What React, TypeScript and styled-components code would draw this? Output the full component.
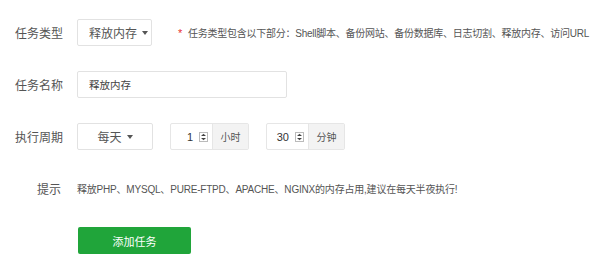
import styled, { createGlobalStyle } from "styled-components";

const GlobalStyle = createGlobalStyle`
  html, body {
    margin: 0;
    padding: 0;
    background: #fff;
    font-family: "Liberation Sans", "Noto Sans CJK SC", sans-serif;
    color: #555;
  }
`;

const Form = styled.div`
  display: flex;
  flex-direction: column;
  gap: 25px;
  padding-top: 19px;
`;

const Row = styled.div`
  display: flex;
  align-items: center;
  height: 27px;
`;

const Label = styled.span<{ $inset?: number }>`
  box-sizing: border-box;
  width: 77px;
  flex-shrink: 0;
  padding-left: ${(p) => p.$inset ?? 15}px;
  font-size: 12px;
  color: #555;
`;

const Select = styled.div<{ $width: number; $center?: boolean }>`
  box-sizing: border-box;
  width: ${(p) => p.$width}px;
  height: 27px;
  display: flex;
  align-items: center;
  justify-content: ${(p) => (p.$center ? "center" : "flex-start")};
  padding-left: ${(p) => (p.$center ? 0 : 11)}px;
  border: 1px solid #e2e2e2;
  border-radius: 2px;
  font-size: 12px;
  color: #555;
  gap: 5px;
`;

const Caret = styled.span`
  width: 0;
  height: 0;
  border-left: 3.5px solid transparent;
  border-right: 3.5px solid transparent;
  border-top: 4px solid #555;
  margin-top: 1px;
`;

const Hint = styled.span`
  margin-left: 26px;
  font-size: 10px;
  letter-spacing: -0.25px;
  color: #555;
  display: flex;
  align-items: center;
  gap: 6px;
  white-space: nowrap;
`;

const Star = styled.span`
  color: #e83030;
  font-size: 11px;
`;

const TextInput = styled.div`
  box-sizing: border-box;
  width: 210px;
  height: 27px;
  display: flex;
  align-items: center;
  padding-left: 11px;
  border: 1px solid #e2e2e2;
  border-radius: 2px;
  font-size: 10.5px;
  color: #444;
`;

const Group = styled.div<{ $gap: number }>`
  display: flex;
  height: 27px;
  margin-left: ${(p) => p.$gap}px;
  border: 1px solid #e6e6e6;
  border-radius: 2px;
  box-sizing: border-box;
`;

const NumberBox = styled.div`
  width: 41px;
  display: flex;
  align-items: center;
  justify-content: flex-end;
  gap: 6px;
  padding-right: 4px;
  box-sizing: border-box;
  font-size: 11px;
  color: #333;
`;

const Addon = styled.div`
  width: 35px;
  display: flex;
  align-items: center;
  justify-content: center;
  background: #f3f3f3;
  border-left: 1px solid #e6e6e6;
  font-size: 10px;
  color: #555;
`;

const Tip = styled.span`
  font-size: 10px;
  letter-spacing: -0.2px;
  color: #555;
  white-space: nowrap;
`;

const Button = styled.button`
  margin-left: 78px;
  width: 113px;
  height: 27px;
  border: none;
  border-radius: 2px;
  background: #20a53a;
  color: #fff;
  font-family: inherit;
  font-size: 11px;
  padding: 0;
`;

const Spin = () => (
  <svg width="9" height="10" viewBox="0 0 9 10">
    <rect x="0.5" y="0.5" width="8" height="9" fill="#fff" stroke="#bbb" />
    <path d="M2 4 L4.5 1.8 L7 4 Z" fill="#444" />
    <path d="M2 6 L4.5 8.2 L7 6 Z" fill="#444" />
  </svg>
);

const Spinner = ({ value, unit, gap }: { value: string; unit: string; gap: number }) => (
  <Group $gap={gap}>
    <NumberBox>
      <span>{value}</span>
      <Spin />
    </NumberBox>
    <Addon>{unit}</Addon>
  </Group>
);

export default function App() {
  return (
    <>
      <GlobalStyle />
      <Form>
        <Row>
          <Label>任务类型</Label>
          <Select $width={75}>
            释放内存
            <Caret />
          </Select>
          <Hint>
            <Star>*</Star>
            任务类型包含以下部分：Shell脚本、备份网站、备份数据库、日志切割、释放内存、访问URL
          </Hint>
        </Row>
        <Row>
          <Label>任务名称</Label>
          <TextInput>释放内存</TextInput>
        </Row>
        <Row>
          <Label>执行周期</Label>
          <Select $width={76} $center>
            每天
            <Caret />
          </Select>
          <Spinner value="1" unit="小时" gap={17} />
          <Spinner value="30" unit="分钟" gap={17} />
        </Row>
        <Row>
          <Label $inset={37}>提示</Label>
          <Tip>释放PHP、MYSQL、PURE-FTPD、APACHE、NGINX的内存占用,建议在每天半夜执行!</Tip>
        </Row>
        <Row>
          <Button>添加任务</Button>
        </Row>
      </Form>
    </>
  );
}
